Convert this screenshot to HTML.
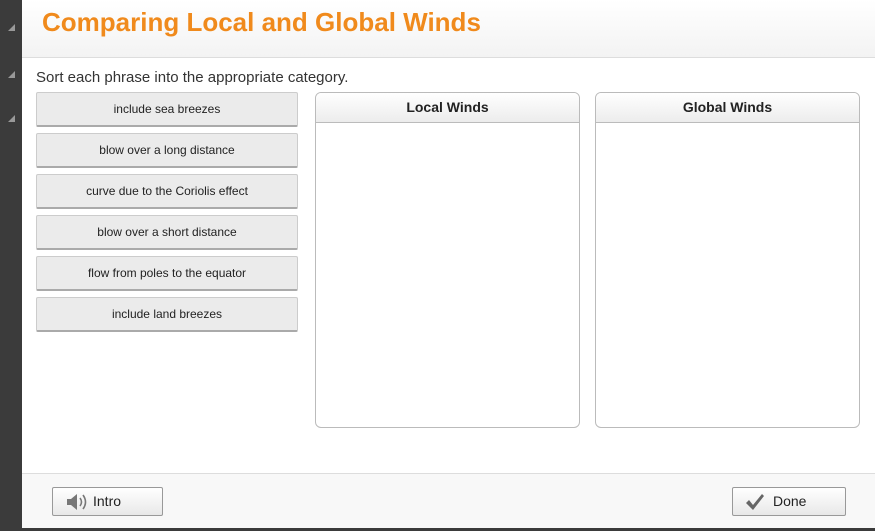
<html><head><style>
body{margin:0;width:875px;height:531px;position:relative;background:#fff;font-family:"Liberation Sans",sans-serif;overflow:hidden}
.side{position:absolute;left:0;top:0;width:22px;height:531px;background:#3b3b3b}
.side i{position:absolute;left:8px;width:0;height:0;border-left:7px solid transparent;border-bottom:7px solid #999}
.hdr{position:absolute;left:22px;top:0;right:0;height:57px;background:linear-gradient(#fff,#f3f3f3);border-bottom:1px solid #ddd}
.hdr h1{margin:0;position:absolute;left:20px;top:7px;font-size:26px;color:#f08a1c;font-weight:bold}
.inst{position:absolute;left:36px;top:69px;font-size:15px;color:#333}
.item{position:absolute;left:36px;width:260px;height:32px;background:#ebebeb;border:1px solid #ccc;border-bottom:2px solid #aaa;border-radius:2px;font-size:12px;color:#222;text-align:center;line-height:32px}
.box{position:absolute;top:92px;width:263px;height:334px;border:1px solid #bbb;border-radius:6px;overflow:hidden}
.box div{height:29px;background:linear-gradient(#fff,#ececec);border-bottom:1px solid #bbb;text-align:center;font-weight:bold;font-size:14px;line-height:29px;color:#222}
.ftr{position:absolute;left:22px;top:473px;right:0;height:55px;background:#f8f8f8;border-top:1px solid #ddd}
.bot{position:absolute;left:0;top:528px;width:875px;height:3px;background:#3b3b3b}
.btn{position:absolute;top:487px;height:27px;border:1px solid #999;border-radius:2px;background:linear-gradient(#fff,#e8e8e8);font-size:14px;line-height:27px;color:#222}
</style></head><body>
<div class="side"><i style="top:24px"></i><i style="top:71px"></i><i style="top:115px"></i></div>
<div class="hdr"><h1>Comparing Local and Global Winds</h1></div>
<div class="inst">Sort each phrase into the appropriate category.</div>
<div class="item" style="top:92px">include sea breezes</div>
<div class="item" style="top:133px">blow over a long distance</div>
<div class="item" style="top:174px">curve due to the Coriolis effect</div>
<div class="item" style="top:215px">blow over a short distance</div>
<div class="item" style="top:256px">flow from poles to the equator</div>
<div class="item" style="top:297px">include land breezes</div>
<div class="box" style="left:315px"><div>Local Winds</div></div>
<div class="box" style="left:595px"><div>Global Winds</div></div>
<div class="ftr"></div><div class="bot"></div>
<div class="btn" style="left:52px;width:109px"><svg width="24" height="20" style="position:absolute;left:12px;top:4px" viewBox="0 0 24 20"><path d="M2 7h4l6-5v16l-6-5H2z" fill="#777"/><path d="M15 6q3 4 0 8M18 3q5 7 0 14" stroke="#777" stroke-width="1.6" fill="none"/></svg><span style="position:absolute;left:40px">Intro</span></div>
<div class="btn" style="left:732px;width:112px"><svg width="20" height="20" style="position:absolute;left:12px;top:4px" viewBox="0 0 20 20"><path d="M1 11l3-3 4 5L17 2l2 2L8 18z" fill="#666"/></svg><span style="position:absolute;left:40px">Done</span></div>
</body></html>
